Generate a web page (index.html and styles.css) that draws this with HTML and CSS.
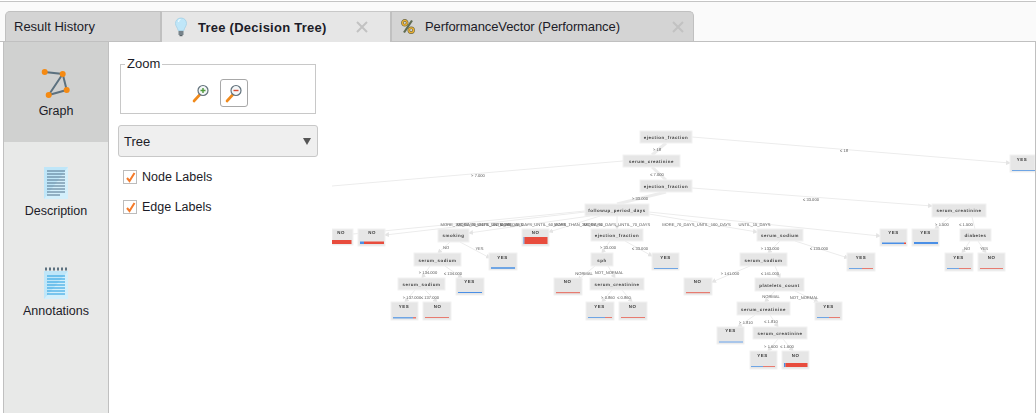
FILE: index.html
```html
<!DOCTYPE html>
<html lang="en">
<head>
    <meta charset="UTF-8">
    <title>Results</title>
    <link rel="stylesheet" href="styles.css">
</head>
<body>
    <div class="topbar"></div>

    <div class="tabs">
        <div class="tab tab-first">Result History</div>
        <div class="tab tab-active">
            <svg class="tab-icon" width="18" height="20" viewBox="0 0 18 20">
                <path d="M9 1C5.5 1 3.5 3.5 3.5 6.5c0 2.5 2 4 2.7 7h5.6c.7-3 2.7-4.5 2.7-7C14.5 3.5 12.5 1 9 1z" fill="#bfe6f8" stroke="#a3cfe4" stroke-width=".8"/>
                <path d="M6.5 5c0-1.5 1-2.5 2-2.5" fill="none" stroke="#eefaff" stroke-width="1.2"/>
                <rect x="6.5" y="14" width="5" height="4" fill="#77838a"/>
                <rect x="7.5" y="18" width="3" height="1.2" fill="#5a646a"/>
            </svg>
            <span class="tab-title">Tree (Decision Tree)</span>
            <svg class="tab-close" width="12" height="12" viewBox="0 0 12 12"><path d="M1 1 11 11M11 1 1 11"/></svg>
        </div>
        <div class="tab tab-last">
            <svg class="tab-icon" width="14" height="15" viewBox="0 0 14 15">
                <path d="M11 1.5 3 13.5" stroke="#5f6b52" stroke-width="2.2"/>
                <circle cx="3.8" cy="3.8" r="2.4" fill="none" stroke="#6f6a45" stroke-width="2.6"/>
                <circle cx="3.8" cy="3.8" r="2.4" fill="none" stroke="#eeb232" stroke-width="1.3"/>
                <circle cx="10.2" cy="11.2" r="2.4" fill="none" stroke="#6f6a45" stroke-width="2.6"/>
                <circle cx="10.2" cy="11.2" r="2.4" fill="none" stroke="#eeb232" stroke-width="1.3"/>
            </svg>
            <span class="tab-title">PerformanceVector (Performance)</span>
            <svg class="tab-close" width="12" height="12" viewBox="0 0 12 12"><path d="M1 1 11 11M11 1 1 11"/></svg>
        </div>
    </div>

    <div class="main">
        <div class="sidebar">
            <div class="side-item selected">
                <svg class="side-icon" width="32" height="32" viewBox="0 0 32 32">
                    <path d="M4.7 5 22.7 7 26.7 23 8.7 28 22.7 7" fill="none" stroke="#5c717f" stroke-width="2"/>
                    <circle cx="4.7" cy="5" r="3" fill="#f58a12"/>
                    <circle cx="22.7" cy="7" r="3" fill="#f58a12"/>
                    <circle cx="26.7" cy="23" r="3" fill="#f58a12"/>
                    <circle cx="8.7" cy="28" r="3" fill="#f58a12"/>
                </svg>
                <span>Graph</span>
            </div>
            <div class="side-item">
                <svg class="side-icon" width="32" height="32" viewBox="0 0 32 32">
                    <rect x="4" y="0" width="24" height="32" fill="#bfe6f8"/>
                    <path d="M28 0v32H4z" fill="#d3effb"/>
                    <path d="M7 4h18M7 7h18M7 10h18M7 13h18M7 16h18M7 19h18M7 22h18M7 25h18M7 28h13" stroke="#50708a" stroke-width="1"/>
                </svg>
                <span>Description</span>
            </div>
            <div class="side-item">
                <svg class="side-icon" width="32" height="32" viewBox="0 0 32 32">
                    <rect x="4" y="4" width="24" height="28" fill="#bfe6f8"/>
                    <path d="M28 4v28H4z" fill="#d3effb"/>
                    <path d="M5 2h22" stroke="#5c717f" stroke-width="3" stroke-dasharray="2 2"/>
                    <path d="M7 9h18M7 12h18M7 15h18M7 18h18M7 21h18M7 24h18M7 27h18" stroke="#1f9be0" stroke-width="1"/>
                </svg>
                <span>Annotations</span>
            </div>
        </div>

        <div class="controls">
            <fieldset class="zoom">
                <legend>Zoom</legend>
                <div class="zoom-buttons">
                    <div class="zoom-btn">
                        <svg width="18" height="20" viewBox="0 0 18 20">
                            <path d="M2 18 7.5 12" stroke="#f08a1c" stroke-width="2.6" stroke-linecap="round"/>
                            <circle cx="11" cy="7.5" r="5" fill="#f4f7f8" stroke="#62727c" stroke-width="1.2"/>
                            <path d="M8.5 7.5h5M11 5v5" stroke="#4f9a3a" stroke-width="1.4"/>
                        </svg>
                    </div>
                    <div class="zoom-btn pressed">
                        <svg width="18" height="20" viewBox="0 0 18 20">
                            <path d="M2 18 7.5 12" stroke="#f08a1c" stroke-width="2.6" stroke-linecap="round"/>
                            <circle cx="11" cy="7.5" r="5" fill="#f4f7f8" stroke="#62727c" stroke-width="1.2"/>
                            <path d="M8.5 7.5h5" stroke="#d9482f" stroke-width="1.4"/>
                        </svg>
                    </div>
                </div>
            </fieldset>

            <div class="dropdown">
                <span>Tree</span>
                <span class="caret"></span>
            </div>

            <div class="check-row">
                <span class="check">
                    <svg width="11" height="11" viewBox="0 0 11 11"><path d="M2 6 4.5 9 9.5 1" fill="none" stroke="#f47a2a" stroke-width="2"/></svg>
                </span>
                Node Labels
            </div>
            <div class="check-row">
                <span class="check">
                    <svg width="11" height="11" viewBox="0 0 11 11"><path d="M2 6 4.5 9 9.5 1" fill="none" stroke="#f47a2a" stroke-width="2"/></svg>
                </span>
                Edge Labels
            </div>
        </div>

        <div class="canvas">
            <svg class="tree" width="703" height="371" viewBox="332 42 703 371">
                <defs>
                    <marker id="arrow" markerWidth="5" markerHeight="5" refX="4" refY="2.5" orient="auto">
                        <path d="M0 0 5 2.5 0 5z" fill="#e4e4e4"/>
                    </marker>
                </defs>

                <!-- edges -->
                <g class="edges">
                    <line class="thick" x1="666" y1="143" x2="652" y2="155"/>
                    <line x1="692" y1="137" x2="1010" y2="163" marker-end="url(#arrow)"/>
                    <line x1="623" y1="161" x2="332" y2="186"/>
                    <line class="thick" x1="652" y1="167" x2="666" y2="180"/>
                    <line class="thick" x1="666" y1="192" x2="617" y2="204"/>
                    <line x1="692" y1="188" x2="932" y2="206" marker-end="url(#arrow)"/>
                    <line x1="585" y1="211" x2="353" y2="234"/>
                    <line x1="585" y1="212" x2="385" y2="235" marker-end="url(#arrow)"/>
                    <line x1="590" y1="216" x2="469" y2="233" marker-end="url(#arrow)"/>
                    <line x1="600" y1="216" x2="549" y2="232" marker-end="url(#arrow)"/>
                    <line x1="617" y1="216" x2="617" y2="229" marker-end="url(#arrow)"/>
                    <line x1="649" y1="214" x2="757" y2="232" marker-end="url(#arrow)"/>
                    <line x1="649" y1="212" x2="880" y2="236" marker-end="url(#arrow)"/>
                    <line x1="972" y1="217" x2="975" y2="229"/>
                    <line x1="950" y1="217" x2="935" y2="229" marker-end="url(#arrow)"/>
                    <line x1="970" y1="241" x2="962" y2="253" marker-end="url(#arrow)"/>
                    <line x1="978" y1="241" x2="986" y2="253" marker-end="url(#arrow)"/>
                    <line x1="780" y1="241" x2="768" y2="253" marker-end="url(#arrow)"/>
                    <line x1="795" y1="241" x2="848" y2="258" marker-end="url(#arrow)"/>
                    <line x1="750" y1="266" x2="712" y2="282" marker-end="url(#arrow)"/>
                    <line x1="775" y1="266" x2="780" y2="278" marker-end="url(#arrow)"/>
                    <line x1="775" y1="291" x2="765" y2="302" marker-end="url(#arrow)"/>
                    <line x1="795" y1="291" x2="818" y2="302" marker-end="url(#arrow)"/>
                    <line x1="755" y1="315" x2="738" y2="327" marker-end="url(#arrow)"/>
                    <line x1="770" y1="315" x2="778" y2="327" marker-end="url(#arrow)"/>
                    <line x1="778" y1="339" x2="768" y2="351" marker-end="url(#arrow)"/>
                    <line x1="783" y1="339" x2="793" y2="351" marker-end="url(#arrow)"/>
                    <line x1="450" y1="242" x2="438" y2="253" marker-end="url(#arrow)"/>
                    <line x1="460" y1="242" x2="490" y2="258" marker-end="url(#arrow)"/>
                    <line x1="430" y1="266" x2="422" y2="278" marker-end="url(#arrow)"/>
                    <line x1="445" y1="266" x2="462" y2="278" marker-end="url(#arrow)"/>
                    <line x1="415" y1="290" x2="405" y2="302" marker-end="url(#arrow)"/>
                    <line x1="425" y1="290" x2="437" y2="302" marker-end="url(#arrow)"/>
                    <line x1="610" y1="241" x2="602" y2="253" marker-end="url(#arrow)"/>
                    <line x1="625" y1="241" x2="652" y2="256" marker-end="url(#arrow)"/>
                    <line x1="595" y1="266" x2="578" y2="280" marker-end="url(#arrow)"/>
                    <line x1="608" y1="266" x2="615" y2="278" marker-end="url(#arrow)"/>
                    <line x1="612" y1="290" x2="602" y2="302" marker-end="url(#arrow)"/>
                    <line x1="622" y1="290" x2="632" y2="302" marker-end="url(#arrow)"/>
                </g>

                <!-- decision nodes -->
                <g class="nodes">
                    <rect x="640" y="131" width="52" height="12"/>
                    <rect x="623" y="155" width="57" height="12"/>
                    <rect x="640" y="180" width="52" height="12"/>
                    <rect x="585" y="204" width="64" height="12"/>
                    <rect x="438" y="229" width="31" height="13"/>
                    <rect x="591" y="229" width="52" height="12"/>
                    <rect x="757" y="229" width="46" height="12"/>
                    <rect x="932" y="204" width="54" height="13"/>
                    <rect x="960" y="229" width="31" height="12"/>
                    <rect x="740" y="253" width="47" height="13"/>
                    <rect x="414" y="253" width="47" height="13"/>
                    <rect x="398" y="278" width="47" height="12"/>
                    <rect x="591" y="253" width="22" height="13"/>
                    <rect x="590" y="278" width="54" height="12"/>
                    <rect x="755" y="278" width="49" height="13"/>
                    <rect x="737" y="302" width="53" height="13"/>
                    <rect x="753" y="327" width="54" height="12"/>
                </g>
                <g class="node-text">
                    <text x="666" y="139">ejection_fraction</text>
                    <text x="651.5" y="163">serum_creatinine</text>
                    <text x="666" y="188">ejection_fraction</text>
                    <text x="617" y="212">followup_period_days</text>
                    <text x="453.5" y="237">smoking</text>
                    <text x="617" y="237">ejection_fraction</text>
                    <text x="780" y="237">serum_sodium</text>
                    <text x="959" y="212">serum_creatinine</text>
                    <text x="975.5" y="237">diabetes</text>
                    <text x="763.5" y="261.5">serum_sodium</text>
                    <text x="437.5" y="261.5">serum_sodium</text>
                    <text x="421.5" y="286">serum_sodium</text>
                    <text x="602" y="261.5">sph</text>
                    <text x="617" y="286">serum_creatinine</text>
                    <text x="779.5" y="286.5">platelets_count</text>
                    <text x="763.5" y="310.5">serum_creatinine</text>
                    <text x="780" y="335">serum_creatinine</text>
                </g>

                <!-- leaves -->
                <g class="nodes">
                    <rect x="332" y="229" width="21" height="16"/>
                    <rect x="358" y="229" width="27" height="17"/>
                    <rect x="522" y="229" width="27" height="17"/>
                    <rect x="1010" y="155" width="25" height="17"/>
                    <rect x="880" y="229" width="27" height="17"/>
                    <rect x="912" y="229" width="27" height="17"/>
                    <rect x="847" y="253" width="28" height="18"/>
                    <rect x="945" y="253" width="28" height="18"/>
                    <rect x="978" y="253" width="27" height="18"/>
                    <rect x="489" y="253" width="28" height="17"/>
                    <rect x="456" y="278" width="28" height="17"/>
                    <rect x="391" y="302" width="27" height="18"/>
                    <rect x="423" y="302" width="28" height="18"/>
                    <rect x="652" y="253" width="27" height="17"/>
                    <rect x="554" y="278" width="28" height="17"/>
                    <rect x="586" y="302" width="28" height="18"/>
                    <rect x="619" y="302" width="28" height="18"/>
                    <rect x="684" y="278" width="28" height="17"/>
                    <rect x="815" y="302" width="27" height="18"/>
                    <rect x="717" y="327" width="27" height="17"/>
                    <rect x="750" y="351" width="27" height="18"/>
                    <rect x="782" y="351" width="27" height="18"/>
                </g>
                <g class="node-text">
                    <text x="341" y="234">NO</text>
                    <text x="372" y="234">NO</text>
                    <text x="535.5" y="234">NO</text>
                    <text x="1022" y="161">YES</text>
                    <text x="893.5" y="234">YES</text>
                    <text x="925.5" y="234">YES</text>
                    <text x="861" y="258.5">YES</text>
                    <text x="958.5" y="258.5">YES</text>
                    <text x="991.5" y="258.5">NO</text>
                    <text x="502.5" y="258.5">YES</text>
                    <text x="469.5" y="283">YES</text>
                    <text x="404" y="307.5">YES</text>
                    <text x="437.5" y="307.5">NO</text>
                    <text x="665.5" y="258.5">YES</text>
                    <text x="567.5" y="283">NO</text>
                    <text x="599.5" y="307.5">YES</text>
                    <text x="632.5" y="307.5">NO</text>
                    <text x="697.5" y="283">NO</text>
                    <text x="828.5" y="307.5">YES</text>
                    <text x="730.5" y="332">YES</text>
                    <text x="762.5" y="356.5">YES</text>
                    <text x="795.5" y="356.5">NO</text>
                </g>

                <!-- class distribution bars -->
                <g class="bars">
                    <rect class="no" x="332" y="240" width="19.5" height="4"/>
                    <rect class="yes" x="360" y="241.5" width="4" height="2.5"/>
                    <rect class="no" x="364" y="241.5" width="20" height="2.5"/>
                    <rect class="yes" x="523.5" y="237" width="1" height="7"/>
                    <rect class="no" x="524.5" y="237" width="23" height="7"/>
                    <rect class="yes-thin" x="1012" y="170" width="23" height="1"/>
                    <rect class="yes" x="882" y="242.5" width="22" height="1.5"/>
                    <rect class="no" x="904" y="242.5" width="2" height="1.5"/>
                    <rect class="yes" x="914" y="242" width="24" height="2"/>
                    <rect class="yes-thin" x="849" y="268" width="13" height="1"/>
                    <rect class="no-thin" x="862" y="268" width="11" height="1"/>
                    <rect class="yes-thin" x="947" y="268" width="12" height="1"/>
                    <rect class="no-thin" x="959" y="268" width="12" height="1"/>
                    <rect class="no-thin" x="980" y="268" width="23" height="1"/>
                    <rect class="yes-thin" x="491" y="267" width="24" height="2"/>
                    <rect class="yes" x="458" y="292" width="24" height="1"/>
                    <rect class="yes-thin" x="393" y="317" width="20" height="1.5"/>
                    <rect class="no-thin" x="413" y="317" width="3" height="1.5"/>
                    <rect class="no-thin" x="425" y="317" width="24" height="1"/>
                    <rect class="yes-thin" x="654" y="268" width="24" height="1"/>
                    <rect class="no-thin" x="556" y="292" width="24" height="1.2"/>
                    <rect class="yes-thin" x="588" y="317" width="17" height="1"/>
                    <rect class="no-thin" x="605" y="317" width="7" height="1"/>
                    <rect class="no-thin" x="621" y="317" width="24" height="1"/>
                    <rect class="no-thin" x="686" y="292" width="24" height="1.2"/>
                    <rect class="yes-thin" x="817" y="317" width="12" height="1"/>
                    <rect class="no-thin" x="829" y="317" width="11" height="1"/>
                    <rect class="yes-pale" x="719" y="341" width="24" height="2"/>
                    <rect class="yes-thin" x="751" y="366" width="12" height="1"/>
                    <rect class="no-thin" x="763" y="366" width="12" height="1"/>
                    <rect class="yes" x="784" y="363" width="1.5" height="4"/>
                    <rect class="no" x="785.5" y="363" width="22" height="4"/>
                </g>

                <!-- edge labels -->
                <g class="edge-text">
                    <text x="657" y="150.5">&gt; 18</text>
                    <text x="844" y="151.5">≤ 18</text>
                    <text x="478" y="176.5">&gt; 7.000</text>
                    <text x="657" y="175.5">≤ 7.000</text>
                    <text x="640" y="199.5">&gt; 33.000</text>
                    <text x="811" y="200.5">≤ 33.000</text>
                    <text x="942" y="225.5">&gt; 1.500</text>
                    <text x="966" y="225.5">≤ 1.500</text>
                    <text x="967" y="249.5">NO</text>
                    <text x="984" y="249.5">YES</text>
                    <text x="770" y="249.5">&gt; 133.000</text>
                    <text x="819" y="249.5">≤ 133.000</text>
                    <text x="730" y="275">&gt; 141.000</text>
                    <text x="770" y="274.5">≤ 141.000</text>
                    <text x="771" y="297.5">NORMAL</text>
                    <text x="804" y="298.5">NOT_NORMAL</text>
                    <text x="746" y="323.5">&gt; 1.810</text>
                    <text x="771" y="322.5">≤ 1.810</text>
                    <text x="771" y="347.5">&gt; 1.600</text>
                    <text x="787" y="347.5">≤ 1.600</text>
                    <text x="446" y="249">NO</text>
                    <text x="479.5" y="249.5">YES</text>
                    <text x="428" y="274">&gt; 134.000</text>
                    <text x="453" y="274.5">≤ 134.000</text>
                    <text x="412" y="298.5">&gt; 137.000</text>
                    <text x="430" y="298.5">≤ 137.000</text>
                    <text x="608" y="248.5">&gt; 33.000</text>
                    <text x="640" y="249.5">≤ 33.000</text>
                    <text x="584" y="274.5">NORMAL</text>
                    <text x="609" y="274">NOT_NORMAL</text>
                    <text x="608" y="298.5">&gt; 0.860</text>
                    <text x="624" y="298.5">≤ 0.860</text>
                    <text x="476" y="225.5">MORE_100_DAYS_UNTIL_300_DAYS</text>
                    <text x="490" y="225.5">MORE_30_DAYS_UNTIL_45_DAYS</text>
                    <text x="533" y="225.5">MORE_45_DAYS_UNTIL_60_DAYS</text>
                    <text x="578" y="225.5">MORE_THAN_300_DAYS</text>
                    <text x="617" y="225.5">MORE_60_DAYS_UNTIL_70_DAYS</text>
                    <text x="696.5" y="225.5">MORE_70_DAYS_UNTIL_100_DAYS</text>
                    <text x="754.5" y="225.5">UNTIL_15_DAYS</text>
                </g>
            </svg>
        </div>
    </div>
</body>
</html>
```

FILE: styles.css
```css
html, body {
    margin: 0;
    height: 413px;
    overflow: hidden;
}

body {
    font-family: "Liberation Sans", Arial, sans-serif;
    font-size: 12.5px;
    color: #1c1c28;
    background-color: #fff;
}

.topbar {
    margin-top: 1px;
    height: 9px;
    background-color: #fafafa;
    border-top: 1px solid #c4c4c4;
}

/* Tabs */
.tabs {
    display: flex;
    height: 30px;
    padding-left: 5px;
    background-color: #fafafa;
}

.tab {
    display: flex;
    align-items: center;
    box-sizing: border-box;
    height: 31px;
    border: 1px solid #c0c0c0;
    border-bottom: none;
    background-color: #d4d4d4;
    font-size: 13px;
    position: relative;
}

.tab-first {
    width: 156px;
    padding-left: 8px;
    border-top-left-radius: 5px;
    height: 30px;
}

.tab-active {
    width: 230px;
    padding-left: 10px;
    background-color: #e6e6e6;
    border-top: 1px solid #c8c8c8;
    z-index: 1;
}

.tab-active .tab-title {
    font-weight: bold;
    margin-left: 8px;
    letter-spacing: .25px;
}

.tab-last {
    width: 303px;
    padding-left: 9px;
    border-top-right-radius: 5px;
    height: 30px;
}

.tab-last .tab-title {
    margin-left: 10px;
    letter-spacing: -.1px;
}

.tab-close {
    margin-left: auto;
    margin-right: 22px;
    fill: none;
    stroke: #c2c2c2;
    stroke-width: 2;
}

.tab-last .tab-close {
    margin-right: 9px;
}

/* Main area */
.main {
    display: flex;
    height: 372px;
    border-top: 1px solid #c0c0c0;
    box-sizing: border-box;
}

.sidebar {
    box-sizing: border-box;
    width: 106px;
    margin-left: 3px;
    flex-shrink: 0;
    background-color: #e8e9e8;
    border-left: 1px solid #c0c0c0;
    border-right: 1px solid #c0c0c0;
}

.side-item {
    display: flex;
    flex-direction: column;
    align-items: center;
    gap: 4px;
    box-sizing: border-box;
    height: 100px;
    padding-top: 25px;
    line-height: 16px;
}

.side-item.selected {
    background-color: #d0d1d0;
}

.controls {
    box-sizing: border-box;
    width: 223px;
    flex-shrink: 0;
    padding: 14px 0 0 9px;
}

.zoom {
    box-sizing: border-box;
    width: 196px;
    height: 58px;
    margin: 0 0 11px 2px;
    padding: 0;
    border: 1px solid #c8c8c8;
}

.zoom legend {
    margin-left: 4px;
    padding: 0 2px;
    font-size: 13px;
    line-height: 16px;
}

.zoom-buttons {
    display: flex;
    justify-content: center;
    align-items: center;
    gap: 5px;
    padding: 7px 2px 0 0;
}

.zoom-btn {
    display: flex;
    align-items: center;
    justify-content: center;
    box-sizing: border-box;
    width: 28px;
    height: 28px;
    border: 1px solid transparent;
    border-radius: 3px;
}

.zoom-btn.pressed {
    border-color: #a8a8a8;
}

.dropdown {
    display: flex;
    align-items: center;
    justify-content: space-between;
    box-sizing: border-box;
    width: 200px;
    height: 32px;
    padding: 0 6px 0 5px;
    background-color: #efefef;
    border: 1px solid #c8c8c8;
    border-radius: 3px;
    margin-bottom: 13px;
    font-size: 13px;
}

.caret {
    width: 0;
    height: 0;
    border-left: 4.5px solid transparent;
    border-right: 4.5px solid transparent;
    border-top: 7px solid #555;
}

.check-row {
    display: flex;
    align-items: center;
    gap: 5px;
    height: 14px;
    margin: 0 0 16px 5px;
}

.check {
    display: flex;
    align-items: center;
    justify-content: center;
    box-sizing: border-box;
    width: 14px;
    height: 14px;
    border: 1px solid #bcbcbc;
    background-color: #fff;
}

/* Tree canvas */
.canvas {
    flex: 1;
    overflow: hidden;
    border-right: 1px solid #c0c0c0;
}

.tree {
    display: block;
    filter: blur(.45px);
}

.edges line {
    stroke: #ececec;
    stroke-width: 1;
}

.edges line.thick {
    stroke-width: 3;
}

.nodes rect {
    fill: #e6e6e6;
    stroke: #f2f2f2;
    stroke-width: 1;
}

.node-text text {
    font-size: 4.4px;
    font-weight: bold;
    letter-spacing: .55px;
    text-anchor: middle;
    fill: #3c3c3c;
    text-rendering: geometricPrecision;
}

.edge-text text {
    font-size: 4.1px;
    text-anchor: middle;
    fill: #555;
    text-rendering: geometricPrecision;
}

.bars .yes { fill: #4a8fe6; }
.bars .no { fill: #e84c3d; }
.bars .yes-thin { fill: #6fa5e4; }
.bars .no-thin { fill: #e77b70; }
.bars .yes-pale { fill: #a9c6ea; }
```
